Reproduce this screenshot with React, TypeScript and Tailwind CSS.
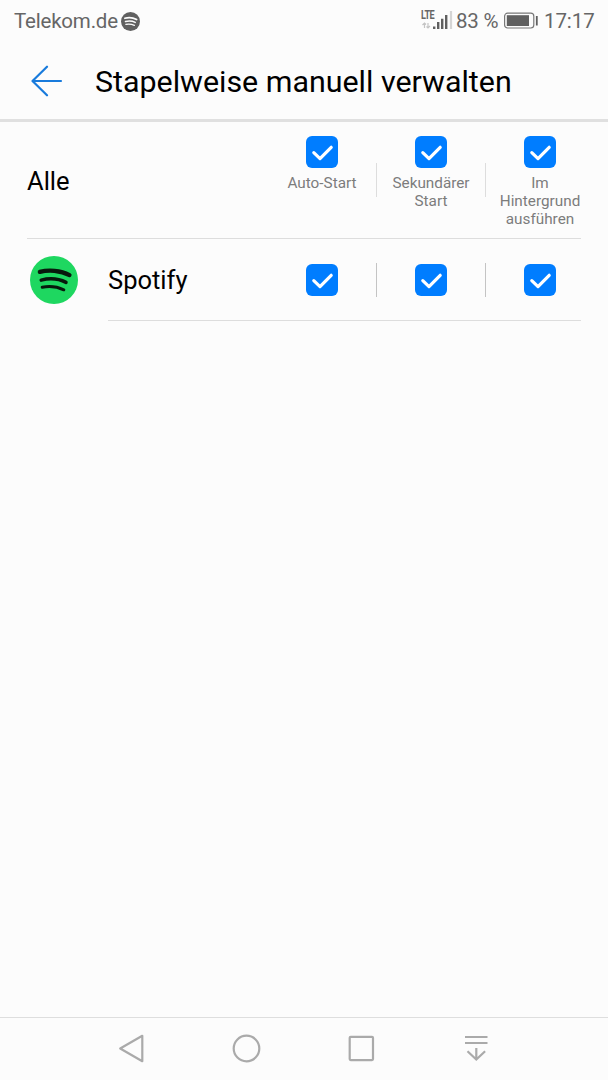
import React, { useState } from 'react';

type Permission = 'autoStart' | 'secondaryStart' | 'background';

const columns: { key: Permission; label: string }[] = [
    { key: 'autoStart', label: 'Auto-Start' },
    { key: 'secondaryStart', label: 'Sekundärer Start' },
    { key: 'background', label: 'Im Hintergrund ausführen' },
];

const SpotifyIcon: React.FC<{ className: string; lineClass: string }> = ({ className, lineClass }) => (
    <svg className={className} viewBox="0 0 48 48" fill="none">
        <circle cx="24" cy="24" r="24" fill="currentColor" />
        <g className={lineClass} strokeLinecap="round">
            <path d="M9.8 15.9C18.5 13.6 30.5 14.3 39.5 19.1" strokeWidth="4.2" />
            <path d="M11.2 24.1C18.5 22.3 28.5 22.6 36 26.4" strokeWidth="3.5" />
            <path d="M12.2 31.2C18.5 30 27 30.5 33.8 33.8" strokeWidth="3" />
        </g>
    </svg>
);

const StatusBar: React.FC = () => (
    <div className="flex h-[42px] items-center justify-between pl-[14px] pr-[14px] text-[20.5px] leading-6 text-[#666666]">
        <div className="flex items-center gap-[3px]">
            <span className="w-[104px] whitespace-nowrap tracking-[-0.2px]">Telekom.de</span>
            <SpotifyIcon className="h-[19px] w-[19px] text-[#606060]" lineClass="stroke-[#fcfcfc]" />
        </div>
        <div className="flex items-center">
            <div className="mr-[3px] flex h-[22px] w-[34px] flex-col">
                <span className="ml-[2px] h-[11px] origin-left scale-x-[0.76] text-[12px] font-bold leading-[11px] tracking-[-0.7px]">LTE</span>
                <svg className="-mt-[11px] h-[22px] w-[34px] shrink-0" viewBox="0 0 34 22" fill="none">
                    <path d="M5.5 18v-5M3.5 15 5.5 13 7 14.5M9 13v5M7.5 16.5 9 18l2-2" stroke="#c4c4c4" strokeWidth="1.2" />
                    <path d="M15.2 16.5V19M19.2 12V19M23.2 8.7V19M27.2 5v14" stroke="#606060" strokeWidth="2.4" />
                    <path d="M32 1V19" stroke="#d5d5d5" strokeWidth="2.2" />
                </svg>
            </div>
            <span className="w-[42px] whitespace-nowrap tracking-[-0.2px]">83 %</span>
            <svg className="ml-[5px] h-[18px] w-[35px]" viewBox="0 0 35 18" fill="none">
                <rect x="1.6" y="1.2" width="29.2" height="14.8" rx="3" stroke="#777777" strokeWidth="1.2" />
                <rect x="3.8" y="3.2" width="22.2" height="10.8" fill="#606060" />
                <path d="M33.8 4v9.5" stroke="#606060" strokeWidth="1.8" />
            </svg>
            <span className="ml-[6px] w-[50px] whitespace-nowrap tracking-[-0.1px]">17:17</span>
        </div>
    </div>
);

const CheckBox: React.FC<{ checked: boolean; label: string; onToggle: () => void }> = ({ checked, label, onToggle }) => (
    <button
        type="button"
        role="checkbox"
        aria-checked={checked}
        aria-label={label}
        onClick={onToggle}
        className={`h-8 w-8 shrink-0 rounded-[6px] ${checked ? 'bg-[#007dff]' : 'border-2 border-[#b0b0b0]'}`}
    >
        {checked && (
            <svg viewBox="0 0 32 32" fill="none" stroke="white" strokeWidth="3.2" strokeLinecap="round" strokeLinejoin="round">
                <path d="M7.8 16.6 14 22.6 25.2 11.3" />
            </svg>
        )}
    </button>
);

const NavigationBar: React.FC = () => (
    <nav className="mt-auto flex h-[63px] items-center justify-center gap-[83px] border-t border-[#dedede] text-[#aaaaaa]">
        <svg className="h-8 w-8" viewBox="0 0 32 32" fill="none" stroke="currentColor" strokeWidth="2.2" strokeLinejoin="round">
            <path d="M4.2 15.5 26.3 2.8v25.4Z" />
        </svg>
        <svg className="h-8 w-8" viewBox="0 0 32 32" fill="none" stroke="currentColor" strokeWidth="2.2">
            <circle cx="15.5" cy="15.5" r="12.8" />
        </svg>
        <svg className="h-8 w-8" viewBox="0 0 32 32" fill="none" stroke="currentColor" strokeWidth="2.2">
            <rect x="3.7" y="3.8" width="23.3" height="23.3" rx="1" />
        </svg>
        <svg className="h-8 w-8" viewBox="0 0 32 32" fill="none" stroke="currentColor" strokeWidth="2.2">
            <path d="M4 4h22.5M4 10h22.5M15.3 15v12M6.5 18.3l8.8 8.2 8.8-8.2" />
        </svg>
    </nav>
);

const App: React.FC = () => {
    const [permissions, setPermissions] = useState<Record<Permission, boolean>>({
        autoStart: true,
        secondaryStart: true,
        background: true,
    });

    const toggle = (key: Permission) => {
        setPermissions({ ...permissions, [key]: !permissions[key] });
    };

    return (
        <main className="flex h-[1080px] w-[608px] flex-col overflow-hidden bg-[#fcfcfc] font-[Roboto,sans-serif] text-black">
            <StatusBar />

            <header className="flex h-[80px] items-center border-b-[3px] border-[#e0e0e0] pl-[31px]">
                <svg className="h-8 w-8" viewBox="0 0 32 32" fill="none" stroke="#197bdc" strokeWidth="2.2" strokeLinecap="round" strokeLinejoin="round">
                    <path d="M30 16H1.5M16 1.7 1.5 16 16 30.3" />
                </svg>
                <h1 className="ml-[32px] whitespace-nowrap pt-[2px] text-[30.4px] leading-9">Stapelweise manuell verwalten</h1>
            </header>

            {/* All apps */}
            <div className="ml-[27px] mr-[27px] flex h-[117px] border-b border-[#dddddd]">
                <span className="w-[241px] self-center pt-[3px] text-[25.5px]">Alle</span>
                <div className="-mr-[13px] flex shrink-0">
                    {columns.map((column, index) => (
                        <React.Fragment key={column.key}>
                            {index > 0 && <div className="mt-[41px] h-[34px] w-px bg-[#dddddd]" />}
                            <div className="flex w-[108px] flex-col items-center pt-[14px]">
                                <CheckBox checked={permissions[column.key]} label={column.label} onToggle={() => toggle(column.key)} />
                                <span className="mt-[6px] w-[88px] text-center text-[15.3px] leading-[18px] text-[#7c7c7c]">{column.label}</span>
                            </div>
                        </React.Fragment>
                    ))}
                </div>
            </div>

            {/* App row */}
            <div className="flex h-[82px] pl-[30px] pr-[27px]">
                <SpotifyIcon className="mt-[17px] h-[48px] w-[48px] shrink-0 text-[#1ed760]" lineClass="stroke-[#07190c]" />
                <div className="ml-[30px] flex flex-1 border-b border-[#dddddd]">
                    <span className="w-[160px] self-center pt-[1px] text-[25.5px]">Spotify</span>
                    <div className="-mr-[13px] flex shrink-0">
                        {columns.map((column, index) => (
                            <React.Fragment key={column.key}>
                                {index > 0 && <div className="mt-[24px] h-[34px] w-px bg-[#c4c4c4]" />}
                                <div className="flex w-[108px] items-center justify-center">
                                    <CheckBox checked={permissions[column.key]} label={`Spotify ${column.label}`} onToggle={() => toggle(column.key)} />
                                </div>
                            </React.Fragment>
                        ))}
                    </div>
                </div>
            </div>

            <NavigationBar />
        </main>
    );
};

export default App;
